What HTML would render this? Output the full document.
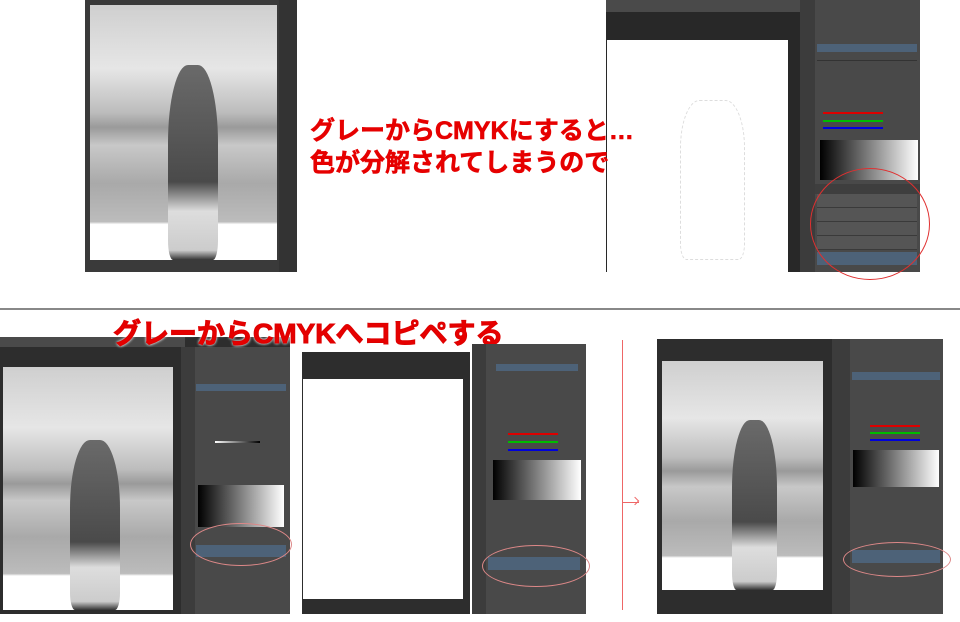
<!DOCTYPE html><html><head><meta charset="utf-8"><style>
*{margin:0;padding:0;box-sizing:border-box}
body{width:960px;height:622px;background:#fff;position:relative;overflow:hidden;font-family:"Liberation Sans","Noto Sans CJK JP",sans-serif}
.a{position:absolute}
.photo{background:linear-gradient(180deg,#cfcfcf 0%,#e6e6e6 25%,#bdbdbd 42%,#9a9a9a 48%,#c8c8c8 55%,#a9a9a9 70%,#bcbcbc 85%,#fff 86%,#fff 100%)}
.girl{background:linear-gradient(180deg,#6a6a6a,#555 40%,#4a4a4a 60%,#ddd 75%,#ccc 95%,#333 100%);border-radius:40% 40% 10% 10%}
.pan{background:#494949}
.tb{background:#3c3c3c}
.grad{background:linear-gradient(90deg,#000,#fff)}
.sel{background:#4d6278}
.rt{color:#e60000;font-weight:bold}
.ell{border:1.5px solid #e03030;border-radius:50%}
.ell2{border:1.5px solid #d88;border-radius:50%}
.row{background:#555;border-bottom:1px solid #3a3a3a}
</style></head><body>
<div class="a" style="left:85px;top:0;width:212px;height:272px;background:#3a3a3a"></div>
<div class="a photo" style="left:90px;top:5px;width:187px;height:255px"></div>
<div class="a girl" style="left:168px;top:65px;width:50px;height:195px"></div>
<div class="a" style="left:279px;top:0;width:18px;height:272px;background:#333"></div>
<div class="a" style="left:606px;top:0;width:194px;height:12px;background:#4a4a4a"></div>
<div class="a" style="left:606px;top:12px;width:194px;height:260px;background:#282828"></div>
<div class="a" style="left:607px;top:40px;width:181px;height:232px;background:#fff"></div>
<div class="a" style="left:680px;top:100px;width:65px;height:160px;border:1px dashed #ddd;border-radius:30% 30% 10% 10%"></div>
<div class="a tb" style="left:800px;top:0;width:15px;height:272px"></div>
<div class="a pan" style="left:815px;top:0;width:105px;height:272px"></div>
<div class="a sel" style="left:817px;top:44px;width:100px;height:8px"></div>
<div class="a grad" style="left:820px;top:140px;width:98px;height:40px"></div>
<div class="a" style="left:817px;top:60px;width:100px;height:1px;background:#333"></div>
<div class="a" style="left:823px;top:112px;width:60px;height:2px;background:#d00"></div>
<div class="a" style="left:823px;top:120px;width:60px;height:2px;background:#0b0"></div>
<div class="a" style="left:823px;top:127px;width:60px;height:2px;background:#00d"></div>
<div class="a" style="left:815px;top:184px;width:105px;height:10px;background:#3e3e3e"></div>
<div class="a row" style="left:817px;top:194px;width:100px;height:14px"></div>
<div class="a row" style="left:817px;top:208px;width:100px;height:14px"></div>
<div class="a row" style="left:817px;top:222px;width:100px;height:14px"></div>
<div class="a row" style="left:817px;top:236px;width:100px;height:14px"></div>
<div class="a sel" style="left:817px;top:252px;width:100px;height:13px"></div>
<div class="a ell" style="left:810px;top:168px;width:120px;height:112px"></div>
<div class="a rt" style="left:310px;top:115px;font-size:25px;line-height:32px;white-space:nowrap;-webkit-text-stroke:0.6px #e60000">グレーからCMYKにすると…<br>色が分解されてしまうので</div>
<div class="a" style="left:0;top:308px;width:960px;height:2px;background:#888"></div>
<div class="a" style="left:0;top:337px;width:290px;height:277px;background:#2d2d2d"></div>
<div class="a" style="left:0;top:337px;width:185px;height:10px;background:#4a4a4a"></div>
<div class="a photo" style="left:3px;top:367px;width:170px;height:243px"></div>
<div class="a girl" style="left:70px;top:440px;width:50px;height:170px"></div>
<div class="a tb" style="left:181px;top:347px;width:14px;height:267px"></div>
<div class="a pan" style="left:195px;top:347px;width:95px;height:267px"></div>
<div class="a sel" style="left:196px;top:384px;width:90px;height:7px"></div>
<div class="a grad" style="left:198px;top:485px;width:86px;height:42px"></div>
<div class="a" style="left:215px;top:441px;width:45px;height:2px;background:linear-gradient(90deg,#fff,#000)"></div>
<div class="a sel" style="left:196px;top:545px;width:90px;height:12px"></div>
<div class="a ell2" style="left:190px;top:523px;width:102px;height:43px"></div>
<div class="a rt" style="left:113px;top:317px;font-size:28px;line-height:34px;white-space:nowrap;-webkit-text-stroke:1px #d00;text-shadow:0 0 3px #fff,0 0 3px #fff">グレーからCMYKへコピペする</div>
<div class="a" style="left:302px;top:352px;width:168px;height:262px;background:#2d2d2d"></div>
<div class="a" style="left:303px;top:379px;width:160px;height:220px;background:#fff"></div>
<div class="a tb" style="left:472px;top:344px;width:14px;height:270px"></div>
<div class="a pan" style="left:486px;top:344px;width:100px;height:270px"></div>
<div class="a sel" style="left:496px;top:364px;width:82px;height:7px"></div>
<div class="a grad" style="left:493px;top:460px;width:88px;height:40px"></div>
<div class="a" style="left:508px;top:433px;width:50px;height:2px;background:#d00"></div>
<div class="a" style="left:508px;top:441px;width:50px;height:2px;background:#0b0"></div>
<div class="a" style="left:508px;top:449px;width:50px;height:2px;background:#00d"></div>
<div class="a sel" style="left:488px;top:557px;width:92px;height:13px"></div>
<div class="a ell2" style="left:482px;top:545px;width:108px;height:42px"></div>
<div class="a" style="left:622px;top:340px;width:1px;height:270px;background:#e66"></div>
<div class="a" style="left:622px;top:502px;width:17px;height:1px;background:#e66"></div>
<div class="a" style="left:632px;top:498px;width:6px;height:6px;border-top:1px solid #e66;border-right:1px solid #e66;transform:rotate(45deg)"></div>
<div class="a" style="left:657px;top:339px;width:286px;height:275px;background:#2d2d2d"></div>
<div class="a photo" style="left:662px;top:361px;width:161px;height:229px"></div>
<div class="a girl" style="left:732px;top:420px;width:45px;height:170px"></div>
<div class="a tb" style="left:832px;top:339px;width:18px;height:275px"></div>
<div class="a pan" style="left:850px;top:339px;width:93px;height:275px"></div>
<div class="a sel" style="left:852px;top:372px;width:88px;height:8px"></div>
<div class="a grad" style="left:853px;top:450px;width:86px;height:37px"></div>
<div class="a" style="left:870px;top:425px;width:50px;height:2px;background:#d00"></div>
<div class="a" style="left:870px;top:432px;width:50px;height:2px;background:#0b0"></div>
<div class="a" style="left:870px;top:439px;width:50px;height:2px;background:#00d"></div>
<div class="a sel" style="left:852px;top:550px;width:88px;height:13px"></div>
<div class="a ell2" style="left:843px;top:542px;width:108px;height:35px"></div>
</body></html>
